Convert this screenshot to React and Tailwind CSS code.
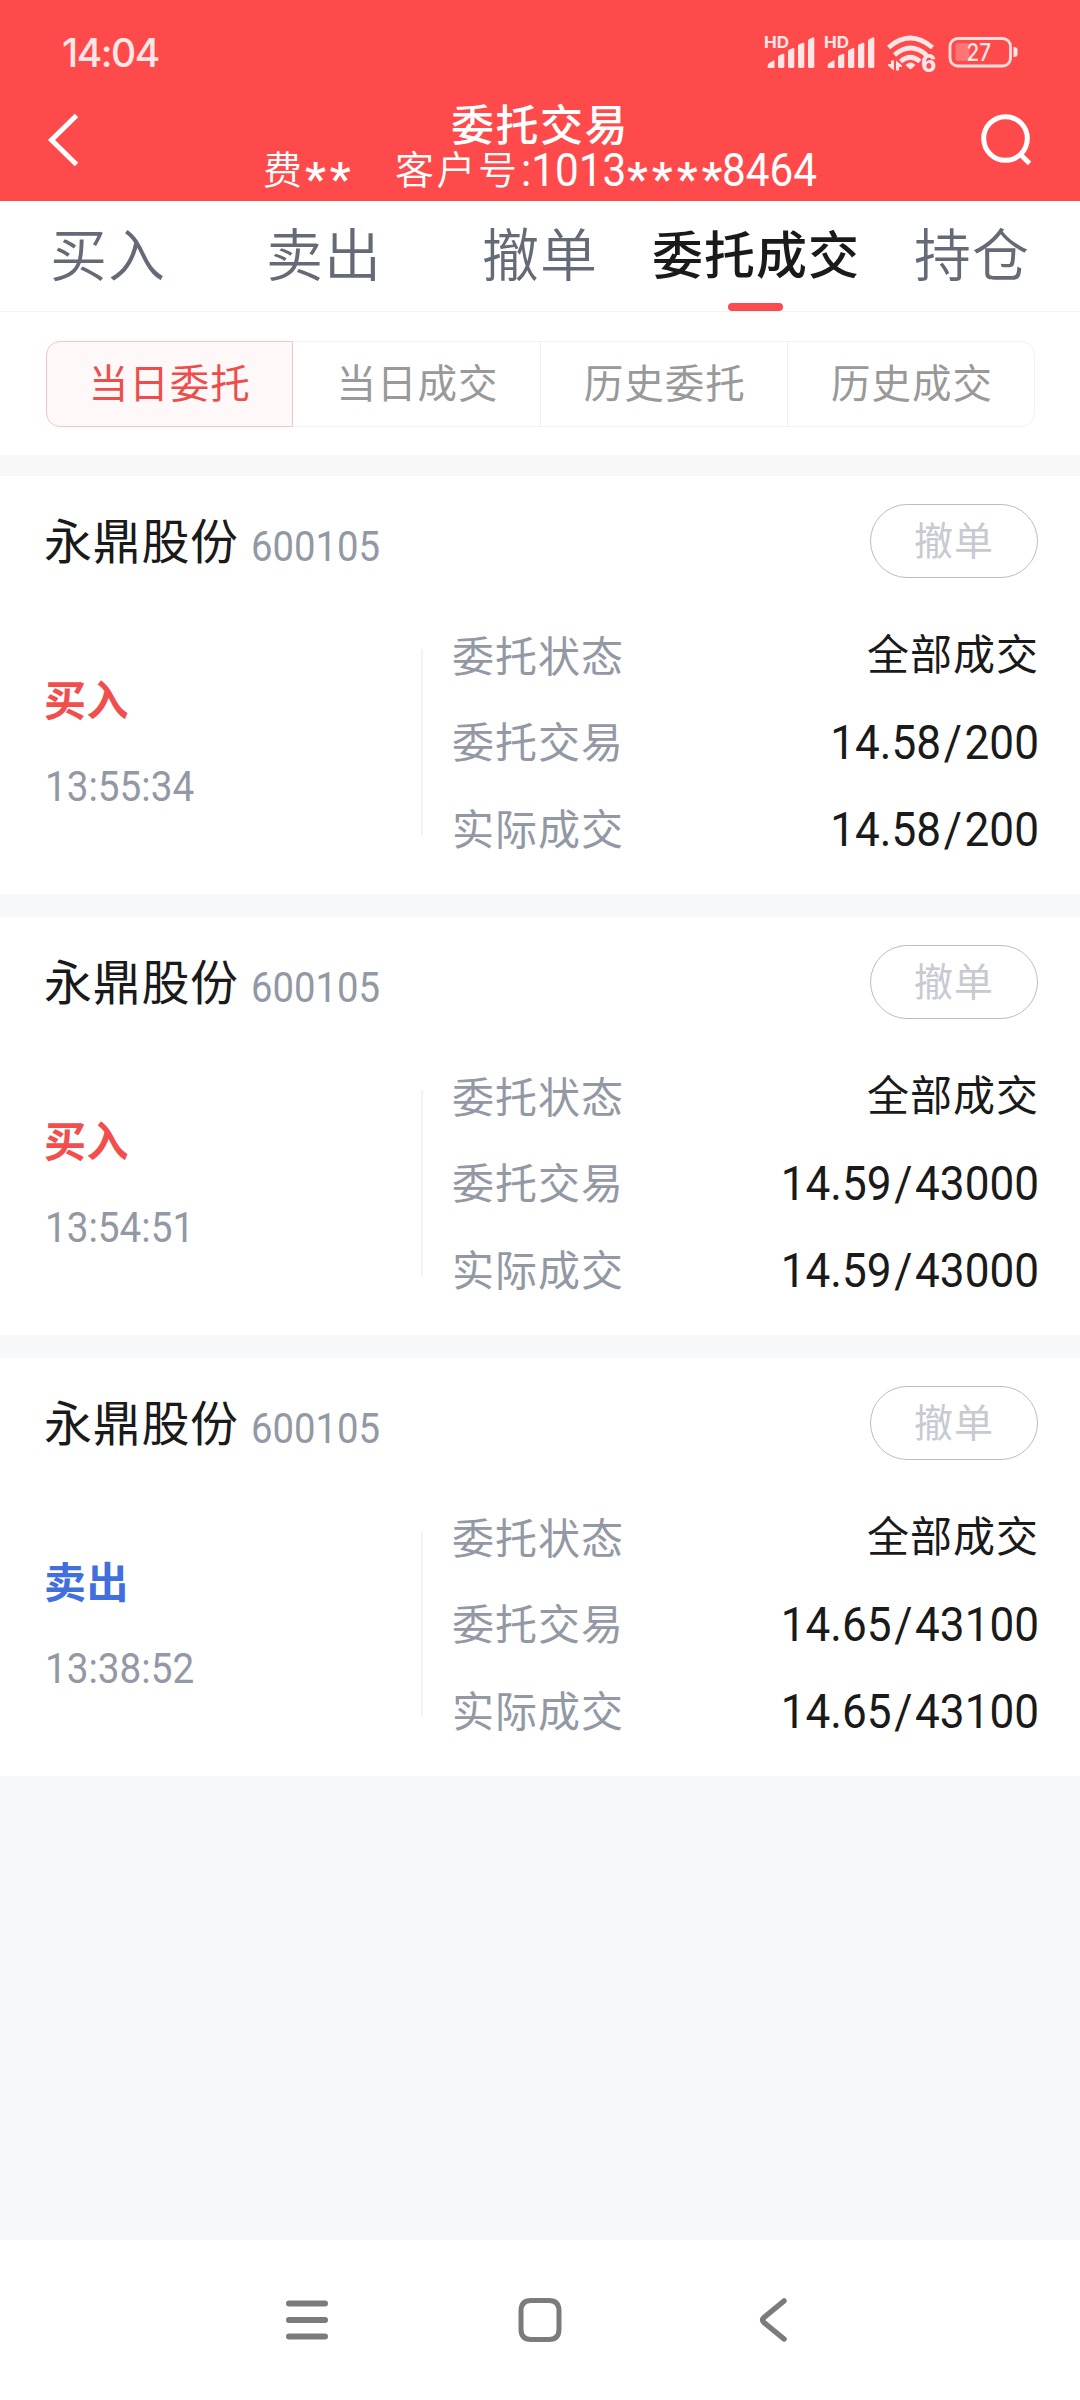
const TABS = ['买入', '卖出', '撤单', '委托成交', '持仓'];
const FILTERS = ['当日委托', '当日成交', '历史委托', '历史成交'];

const ORDERS = [
  { id: 1, name: '永鼎股份', code: '600105', side: 'buy', time: '13:55:34', status: '全部成交', placed: '14.58/200', filled: '14.58/200' },
  { id: 2, name: '永鼎股份', code: '600105', side: 'buy', time: '13:54:51', status: '全部成交', placed: '14.59/43000', filled: '14.59/43000' },
  { id: 3, name: '永鼎股份', code: '600105', side: 'sell', time: '13:38:52', status: '全部成交', placed: '14.65/43100', filled: '14.65/43100' },
];

function Signal({ x }) {
  return (
    <g transform={`translate(${x} 0)`}>
      <text x="-1.500" y="18" fontSize="16.500" fontWeight="700" textLength="25" lengthAdjust="spacingAndGlyphs" className="font-['Inter',sans-serif]">
        HD
      </text>
      <path d="M2 36.500 Q2 33.500 4.500 32.500 L8 30.400 Q9 30 9 31.200 V38 H3.500 Q2 38 2 36.500Z" />
      <path d="M12.500 27 Q12.500 25.900 13.500 25.400 L17.500 23.800 Q18.800 23.500 18.800 25 V36.500 Q18.800 38 17.300 38 H14 Q12.500 38 12.500 36.500Z" />
      <path d="M22.500 21.500 Q22.500 20.300 23.500 19.800 L27.500 18 Q28.800 17.700 28.800 19 V36.500 Q28.800 38 27.300 38 H24 Q22.500 38 22.500 36.500Z" />
      <path d="M32.500 16 Q32.500 14.800 33.500 14.300 L37.500 12.700 Q38.800 12.400 38.800 13.700 V36.500 Q38.800 38 37.300 38 H34 Q32.500 38 32.500 36.500Z" />
      <path d="M42.500 11 Q42.500 9.800 43.500 9.200 L47.500 7.300 Q48.800 7 48.800 8.300 V36.500 Q48.800 38 47.300 38 H44 Q42.500 38 42.500 36.500Z" />
    </g>
  );
}

function StatusIcons() {
  return (
    <svg width="256" height="50" viewBox="0 0 256 50" fill="#ffe6e6">
      <Signal x={1.5} />
      <Signal x={61.5} />
      {/* wifi */}
      <g fill="none" stroke="#ffe6e6" strokeWidth="4.600">
        <path d="M124.500 17.500 Q146 -1.500 168.500 17.500" />
        <path d="M130.500 25 Q146.500 11 162.500 25" />
        <path d="M136.500 31.500 Q146.500 23 156 31.500" />
      </g>
      <path d="M141.500 35 Q146.500 30 151.500 35 L147.500 38.800 Q146.500 39.600 145.500 38.800Z" />
      <path d="M127 30.500 H130 V40.500 L124 35.500 V34 H127Z M132 40.500 V30.500 L138 35.500 V37 H135 V40.500Z" />
      <text x="157.300" y="42" fontSize="24" fontWeight="800" textLength="15" lengthAdjust="spacingAndGlyphs" className="font-['Inter',sans-serif]">
        6
      </text>
      {/* battery */}
      <rect x="186" y="8.500" width="60.500" height="27.500" rx="8" fill="none" stroke="#ffdede" strokeWidth="2.800" />
      <rect x="191.500" y="13" width="14" height="18" rx="3" fill="#ff7474" />
      <path d="M249.500 17 Q253.500 17 253.500 19.500 V24.500 Q253.500 27 249.500 27Z" />
      <text x="202.500" y="31" fontSize="24" fontWeight="500" textLength="24.500" lengthAdjust="spacingAndGlyphs" className="font-['Inter',sans-serif]">
        27
      </text>
    </svg>
  );
}

function Header() {
  return (
    <header className="h-[201px] bg-[#ff4a4b] text-white">
      <div className="flex h-[86px] items-start justify-between pl-[62px] pr-[60px] pt-[30px]">
        <span className="font-['Inter',sans-serif] text-[39px] font-medium leading-[46px] tracking-[-1.5px] text-[#ffe6e6]">14:04</span>
        <StatusIcons />
      </div>
      <div className="flex items-start justify-between pl-[46px] pr-[46px]">
        <svg width="40" height="60" viewBox="0 0 40 60" className="mt-[24px]" fill="none" stroke="white" strokeWidth="5">
          <path d="M30.500 5.500 L5.500 30 L30.500 54.500" />
        </svg>
        <div className="flex w-[560px] flex-col pl-[11px] pt-[11px]">
          <h1 className="pl-[188px] text-[43px] font-medium leading-[50px] tracking-[1.500px]">委托交易</h1>
          <div className="flex h-[40px] items-center whitespace-nowrap text-[39px] font-[350] leading-[40px] *:shrink-0">
            <span className="w-[42px]">费</span>
            <span className="w-[90px] translate-y-[12px] font-['Roboto',sans-serif] text-[47px] font-medium tracking-[4px]">**</span>
            <span className="w-[126px] tracking-[2.500px]">客户号</span>
            <span className="w-[106px] origin-left translate-y-[3px] scale-x-90 font-['Roboto',sans-serif] text-[47px] font-normal">:1013</span>
            <span className="w-[95px] translate-y-[12px] font-['Roboto',sans-serif] text-[47px] font-medium tracking-[4px]">****</span>
            <span className="origin-left translate-y-[3px] scale-x-90 font-['Roboto',sans-serif] text-[47px] font-normal">8464</span>
          </div>
        </div>
        <svg width="56" height="60" viewBox="0 0 56 60" className="mt-[23px]" fill="none" stroke="white" strokeWidth="5">
          <circle cx="27.500" cy="29.500" r="21.800" />
          <path d="M42 45 L51.500 54.500" />
        </svg>
      </div>
    </header>
  );
}

function OrderCard({ order }) {
  const rows = [
    ['委托状态', order.status],
    ['委托交易', order.placed],
    ['实际成交', order.filled],
  ];

  return (
    <article className="h-[418px] bg-white pl-[44px] pr-[42px] pt-[28px]">
      <div className="flex h-[74px] items-center justify-between">
        <div className="flex items-center">
          <h2 className="-mt-[6px] text-[48px] font-normal leading-[74px] tracking-[0.7px] text-[#1a1a1a]">{order.name}</h2>
          <span className="ml-[12px] origin-left scale-x-[0.89] pt-[10px] font-['Roboto',sans-serif] text-[43px] text-[#9299a5]">{order.code}</span>
        </div>
        <button className="h-[74px] w-[168px] rounded-full border border-[#bdbdbd] pb-[7px] text-[39px] leading-[64px] tracking-[1px] text-[#c8cad1]">撤单</button>
      </div>
      <div className="mt-[49px] flex">
        <div className="w-[377px] pt-[41px]">
          <p className={`text-[42px] font-bold leading-[60px] tracking-[0.5px] ${order.side === 'buy' ? 'text-[#f34e4e]' : 'text-[#416fdf]'}`}>
            {order.side === 'buy' ? '买入' : '卖出'}
          </p>
          <p className="mt-[28px] origin-left scale-x-90 pl-px font-['Roboto',sans-serif] text-[43px] leading-[60px] text-[#9299a5]">{order.time}</p>
        </div>
        <div className="mt-[22px] h-[186px] w-[2px] bg-[#f1f2f4]" />
        <dl className="ml-[29px] flex-1">
          {rows.map(([label, value], i) => (
            <div key={label} className="flex h-[86.3px] items-start justify-between">
              <dt className="-mt-[3px] text-[42px] leading-[60px] tracking-[1px] text-[#9299a5]">{label}</dt>
              {i === 0 ? (
                <dd className="-mr-px -mt-[5px] text-[42px] leading-[60px] tracking-[1px] text-[#1a1a1a]">{value}</dd>
              ) : (
                <dd className="-mr-px origin-right scale-x-90 font-['Roboto',sans-serif] text-[49px] leading-[60px] text-[#1a1a1a]">
                  {value.split('/')[0]}
                  <span className="px-[3px]">/</span>
                  {value.split('/')[1]}
                </dd>
              )}
            </div>
          ))}
        </dl>
      </div>
    </article>
  );
}

export default function App() {
  return (
    <div className="flex h-[2400px] w-[1080px] flex-col overflow-hidden bg-[#f7f8fa] font-['Noto_Sans_CJK_SC',sans-serif]">
      <Header />

      <nav className="grid h-[111px] grid-cols-5 border-b border-[#f3f4f5] bg-white">
        {TABS.map((tab) => {
          const active = tab === '委托成交';
          return (
            <div key={tab} className="flex flex-col items-center justify-between">
              <span
                className={
                  active
                    ? 'whitespace-nowrap pt-[11px] text-[51px] font-medium leading-[80px] tracking-[1px] text-[#1a1a1a]'
                    : 'pt-[10px] text-[57px] font-[350] leading-[80px] tracking-[1px] text-[#646a76]'
                }
              >
                {tab}
              </span>
              {active && <span className="mr-[2px] h-[8px] w-[55px] rounded-full bg-[#fb4c4d]" />}
            </div>
          );
        })}
      </nav>

      <div className="h-[143px] bg-white pl-[46px] pr-[45px] pt-[29px]">
        <div className="grid h-[86px] grid-cols-4">
          {FILTERS.map((filter, i) => (
            <button
              key={filter}
              className={`pb-[6px] pl-[2px] text-[39.500px] leading-[76px] tracking-[1px] first:rounded-l-[14px] first:pl-0 last:rounded-r-[14px] ${
                i === 0 ? 'border border-[#f3c6c6] bg-[#fff8f8] text-[#ec4f4b]' : 'border border-l-0 border-[#f1f2f4] text-[#999999]'
              }`}
            >
              {filter}
            </button>
          ))}
        </div>
      </div>

      <main className="flex flex-1 flex-col gap-[23px] pt-[21px]">
        {ORDERS.map((order) => (
          <OrderCard key={order.id} order={order} />
        ))}
      </main>

      <footer className="flex h-[160px] items-center justify-between bg-white px-[280px]">
        <svg width="54" height="54" viewBox="0 0 54 54" stroke="#7b7b7b" strokeWidth="6" strokeLinecap="round">
          <path d="M9 10.500 H45 M9 27 H45 M9 43.500 H45" />
        </svg>
        <svg width="54" height="54" viewBox="0 0 54 54" fill="none" stroke="#7b7b7b" strokeWidth="5">
          <path d="M18 7.500 H36 Q46 7.500 46 18 V36 Q46 46.500 36 46.500 H18 Q8 46.500 8 36 V18 Q8 7.500 18 7.500Z" />
        </svg>
        <svg width="54" height="54" viewBox="0 0 54 54" fill="none" stroke="#7b7b7b" strokeWidth="5.500" strokeLinecap="round">
          <path d="M38 8 L18 24.500 Q15.500 27 18 29.500 L38 46" />
        </svg>
      </footer>
    </div>
  );
}
